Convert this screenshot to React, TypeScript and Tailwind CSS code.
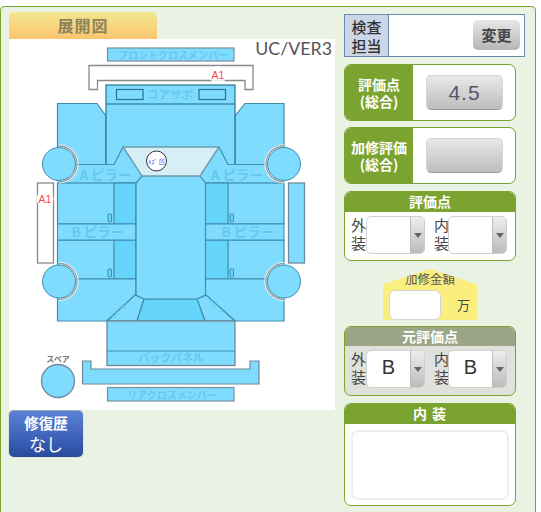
const fill = "#7fdcff";
const glass = "#66d5fb";
const line = "#3f8dab";
const ink = "#66c8ec";

function Label({ x, y, size = 10, children }: { x: number; y: number; size?: number; children: string }) {
  return (
    <text x={x} y={y} fontSize={size} fill={ink} textAnchor="middle" fontWeight="700" fontFamily="'Noto Sans CJK JP', sans-serif">
      {children}
    </text>
  );
}

// the grey arc only shows on the side facing the body
function Wheel({ x, y, side }: { x: number; y: number; side: "l" | "r" }) {
  const sweep = side === "l" ? 1 : 0;
  const arc = (r: number) => `M${x} ${y - r}A${r} ${r} 0 0 ${sweep} ${x} ${y + r}`;
  return (
    <g>
      <path d={arc(18)} fill="none" stroke="#fff" strokeWidth={3} />
      <path d={arc(18)} fill="none" stroke="#999" strokeWidth={1.3} />
      <circle cx={x} cy={y} r={16.5} fill={fill} stroke={line} strokeWidth={1} />
    </g>
  );
}

function Door({ side, y, h }: { side: "l" | "r"; y: number; h: number }) {
  const isLeft = side === "l";
  return (
    <g stroke={line} strokeWidth={1.2}>
      <rect x={isLeft ? 57.5 : 205} y={y} width={isLeft ? 78.5 : 79} height={h} fill={fill} />
      <rect x={isLeft ? 114 : 205} y={y} width={isLeft ? 22 : 23} height={h} fill={glass} />
      <rect x={isLeft ? 108 : 230} y={y + h - 10} width={3.5} height={8} rx={1} fill={glass} strokeWidth={1} />
    </g>
  );
}

function CarDiagram() {
  return (
    <svg viewBox="9 39 326 371" className="block h-[371px] w-[326px]">
      <rect x="9" y="39" width="326" height="371" fill="#fff" />
      <text x="332" y="55" fontSize="17.8" fill="#555" textAnchor="end" fontFamily="Lato, sans-serif">UC/VER3</text>

      <rect x="107.5" y="48" width="126.5" height="13" fill={fill} stroke="#75909f" strokeWidth={1.2} />
      <Label x={173} y={59} size={10}>フロントクロスメンバー</Label>

      <path d="M89 65.5H253V89.5H245V80.5H97.5V89.5H89Z" fill="#fff" stroke="#888" strokeWidth={1.3} />

      {/* fenders */}
      <path d="M57.5 103.5H97L106 116V165H57.5Z" fill={fill} stroke={line} strokeWidth={1.2} />
      <path d="M284 103.5H245L235 116V165H284Z" fill={fill} stroke={line} strokeWidth={1.2} />

      {/* hood and core support */}
      <rect x="106" y="85" width="129" height="80" fill={fill} stroke="#28718f" strokeWidth={1.2} />
      <path d="M106 104H235" stroke={line} strokeWidth={1.5} />
      <rect x="116.5" y="89.5" width="26.5" height="10" fill={fill} stroke="#28718f" strokeWidth={1.2} />
      <rect x="199" y="89.5" width="26.5" height="10" fill={fill} stroke="#28718f" strokeWidth={1.2} />
      <Label x={170} y={99} size={11.5}>コアサポ</Label>

      {/* A pillars */}
      <path d="M57.5 164H114L123 147L142 176L136 183H57.5Z" fill={fill} />
      <path d="M284 164H228L219 147L200 176L205 183H284Z" fill={fill} />
      <path d="M70 164.5H114L123 147M272 164.5H228L219 147" fill="none" stroke={line} strokeWidth={1.2} />
      <Label x={105.500} y={180} size={13.500}>A ピラー</Label>
      <Label x={237} y={180} size={13.500}>A ピラー</Label>

      {/* doors */}
      <Door side="l" y={183} h={41} />
      <Door side="l" y={240} h={39} />
      <Door side="r" y={183} h={41} />
      <Door side="r" y={240} h={39} />
      <rect x="57.5" y="224" width="78.5" height="16" fill={fill} stroke={line} strokeWidth={1} />
      <rect x="205" y="224" width="79" height="16" fill={fill} stroke={line} strokeWidth={1} />
      <Label x={98} y={237} size={13.500}>B ピラー</Label>
      <Label x={248} y={237} size={13.500}>B ピラー</Label>

      {/* quarters */}
      <path d="M57.5 279H136V295L107 321H57.5Z" fill={fill} stroke={line} strokeWidth={1.2} />
      <path d="M284 279H205V295L235 321H284Z" fill={fill} stroke={line} strokeWidth={1.2} />
      <path d="M135 295L144 299L137 321H107Z" fill={fill} stroke={line} strokeWidth={1.2} />
      <path d="M206 295L197 299L205 321H235Z" fill={fill} stroke={line} strokeWidth={1.2} />
      <path d="M144 299H197L205 321H137Z" fill={glass} stroke={line} strokeWidth={1.2} />
      <text x="122" y="311" fontSize="7" fill={ink} textAnchor="middle" transform="rotate(-42 122 309)" fontFamily="'Noto Sans CJK JP', sans-serif">Cピラー</text>
      <text x="219" y="311" fontSize="7" fill={ink} textAnchor="middle" transform="rotate(42 219 309)" fontFamily="'Noto Sans CJK JP', sans-serif">Cピラー</text>

      {/* roof and windshield */}
      <path d="M142 176H200L205.500 183V295L197 299H144L136 295V183Z" fill={fill} stroke={line} strokeWidth={1.2} />
      <path d="M123 147H219L200 176H142Z" fill="#d6eef6" stroke="#6d9fb3" strokeWidth={1.5} />

      <Wheel x={59} y={164} side="l" />
      <Wheel x={284} y={164} side="r" />
      <Wheel x={59} y={281.500} side="l" />
      <Wheel x={284} y={281.500} side="r" />

      {/* side mouldings */}
      <rect x="37.500" y="183" width="16" height="80" fill="#fff" stroke="#888" strokeWidth={1.3} />
      <rect x="288.500" y="183" width="16" height="80" fill={fill} stroke="#6f8b9b" strokeWidth={1.3} />

      {/* trunk */}
      <rect x="107" y="321" width="128" height="44.500" fill={fill} stroke="#718797" strokeWidth={1.3} />
      <path d="M107 351H235" stroke={line} strokeWidth={1.2} />
      <Label x={171} y={362} size={11}>バックパネル</Label>
      <path d="M82.500 361H91V369H250V361H259V384H82.500Z" fill={fill} stroke="#718797" strokeWidth={1.2} />
      <rect x="107.500" y="387.500" width="126.500" height="13.500" fill={fill} stroke="#75909f" strokeWidth={1.2} />
      <Label x={172} y={399} size={10}>リアクロスメンバー</Label>

      {/* spare */}
      <text x="58" y="362" fontSize="8" fill="#777" textAnchor="middle" fontWeight="700" fontFamily="'Noto Sans CJK JP', sans-serif">スペア</text>
      <circle cx="58" cy="381" r="16.500" fill={fill} stroke="#6f8b9b" strokeWidth={1.3} />

      {/* damage marks */}
      <circle cx="218" cy="75" r="9" fill="#fff" fillOpacity={0.85} />
      <text x="218" y="79" fontSize="10.500" fill="#f44" textAnchor="middle" fontFamily="'Liberation Sans', sans-serif">A1</text>
      <circle cx="45" cy="199" r="8.500" fill="#fff" />
      <text x="45" y="203" fontSize="10.500" fill="#f44" textAnchor="middle" fontFamily="'Liberation Sans', sans-serif">A1</text>
      <circle cx="156.500" cy="161" r="10" fill="#fff" stroke="#333" strokeWidth={1} />
      <text x="156.500" y="164" fontSize="6" fill="#44f" textAnchor="middle" fontFamily="'Noto Sans CJK JP', sans-serif">ｷｽﾞ 凹</text>
    </svg>
  );
}

function ScoreCard({ title, value }: { title: React.ReactNode; value?: string }) {
  return (
    <div className="flex h-[57px] w-[172px] overflow-hidden rounded-[7px] border border-[#7ba330] bg-white">
      <div className="flex w-[68px] shrink-0 items-center justify-center bg-[#7ba330] text-center text-[14px] font-bold leading-[17px] text-white">
        <div>{title}</div>
      </div>
      <div className="flex flex-1 items-center pl-[13px]">
        <div className="flex h-[35px] w-[77px] items-center justify-center rounded-[5px] border border-[#d5d5d5] border-b-[#9a9a9a] bg-gradient-to-b from-[#e9e9e9] to-[#bdbdbd] font-['Liberation_Sans',sans-serif] text-[21px] tracking-[1px] text-[#556]">
          {value}
        </div>
      </div>
    </div>
  );
}

function Select({ value }: { value?: string }) {
  return (
    <div className="flex h-[38px] w-[59px] overflow-hidden rounded-[5px] border border-[#cfcfcf] bg-white">
      <div className="flex-1 text-center font-['Liberation_Sans',sans-serif] text-[20px] leading-[33px] text-[#333]">{value}</div>
      <div className="flex w-[14px] items-center justify-center border-l border-[#bbb] bg-gradient-to-b from-[#eee] to-[#bbb]">
        <div className="h-0 w-0 border-x-[4px] border-t-[5px] border-x-transparent border-t-[#666]" />
      </div>
    </div>
  );
}

function GradeRow({ outer, inner }: { outer?: string; inner?: string }) {
  return (
    <div className="flex pl-[6px]">
      <div className="w-[15px] text-[15px] leading-[18px] text-[#444]">外<br />装</div>
      <Select value={outer} />
      <div className="ml-[9px] w-[14px] text-[15px] leading-[18px] text-[#444]">内<br />装</div>
      <Select value={inner} />
    </div>
  );
}

export default function App() {
  return (
    <div className="h-[512px] w-[541px] overflow-hidden bg-white pt-[6px] font-['Noto_Sans_CJK_JP',sans-serif]">
      <div className="flex h-[520px] w-[536px] rounded-t-[4px] border border-[#7ba330] bg-[#eaf2e3] pl-[8px]">
        <div className="w-[326px] shrink-0 pt-[5px]">
          <div className="flex h-[27px] w-[148px] items-center justify-center rounded-t-[5px] bg-gradient-to-b from-[#f2e88e] to-[#fbc46f] pb-[1px] text-[16px] font-bold tracking-[1px] text-[#8c825c]">
            展開図
          </div>
          <CarDiagram />
          <div className="flex h-[47px] w-[74px] flex-col items-center justify-center rounded-[5px] border-t border-[#9aa] bg-gradient-to-b from-[#5c82d8] to-[#284b9f] text-white shadow-[0_0_1px_#667]">
            <span className="text-[14.5px] font-bold leading-[20px]">修復歴</span>
            <span className="text-[17px] leading-[22px]">なし</span>
          </div>
        </div>

        <div className="ml-[9px] flex w-[181px] flex-col pt-[7px]">
          <div className="flex h-[43px] border border-[#6c8cae] bg-white">
            <div className="flex w-[44px] items-center justify-center border-r border-[#6c8cae] bg-[#cbd7e7] text-center text-[15px] font-medium leading-[19px] text-[#333]">
              <div>検査<br />担当</div>
            </div>
            <div className="flex flex-1 justify-end pr-[4px] pt-[5px]">
              <div className="flex h-[30px] w-[47px] items-center justify-center rounded-[5px] bg-gradient-to-b from-[#e8e8e8] to-[#b5b5b5] text-[15px] font-bold text-[#444]">
                変更
              </div>
            </div>
          </div>

          <div className="mt-[7px]"><ScoreCard title={<>評価点<br />(総合)</>} value="4.5" /></div>
          <div className="mt-[6px]"><ScoreCard title={<>加修評価<br />(総合)</>} /></div>

          <div className="mt-[7px] h-[70px] w-[172px] overflow-hidden rounded-[7px] border border-[#7ba330] bg-white">
            <div className="h-[20px] bg-[#7ba330] text-center text-[14px] font-bold leading-[19px] text-white">評価点</div>
            <div className="pt-[4px]"><GradeRow /></div>
          </div>

          <div className="relative ml-[39px] mt-[8px] h-[51px] w-[94px] self-start bg-[#faee7f] [clip-path:polygon(50%_0,100%_30%,100%_100%,0_100%,0_30%)]">
            <div className="pt-[1px] text-center text-[12.5px] leading-[18px] text-[#555]">加修金額</div>
            <div className="flex items-center pl-[6px] pt-[2px]">
              <div className="h-[30px] w-[52px] rounded-[6px] border border-[#d5d5d5] bg-white" />
              <span className="ml-[16px] text-[13px] text-[#444]">万</span>
            </div>
          </div>

          <div className="mt-[6px] h-[70px] w-[172px] overflow-hidden rounded-[7px] border border-[#7ba330] bg-[#dfe2da]">
            <div className="h-[19px] bg-[#9ca585] text-center text-[14px] font-bold leading-[19px] text-white">元評価点</div>
            <div className="pt-[4px]"><GradeRow outer="B" inner="B" /></div>
          </div>

          <div className="mt-[7px] h-[103px] w-[172px] overflow-hidden rounded-[7px] border border-[#7ba330] bg-white">
            <div className="h-[20px] bg-[#7ba330] text-center text-[14px] font-bold leading-[19px] tracking-[1px] text-white">内 装</div>
            <div className="mx-[6px] mt-[6px] h-[70px] rounded-[7px] border-2 border-[#eee] bg-white" />
          </div>
        </div>
      </div>
    </div>
  );
}
